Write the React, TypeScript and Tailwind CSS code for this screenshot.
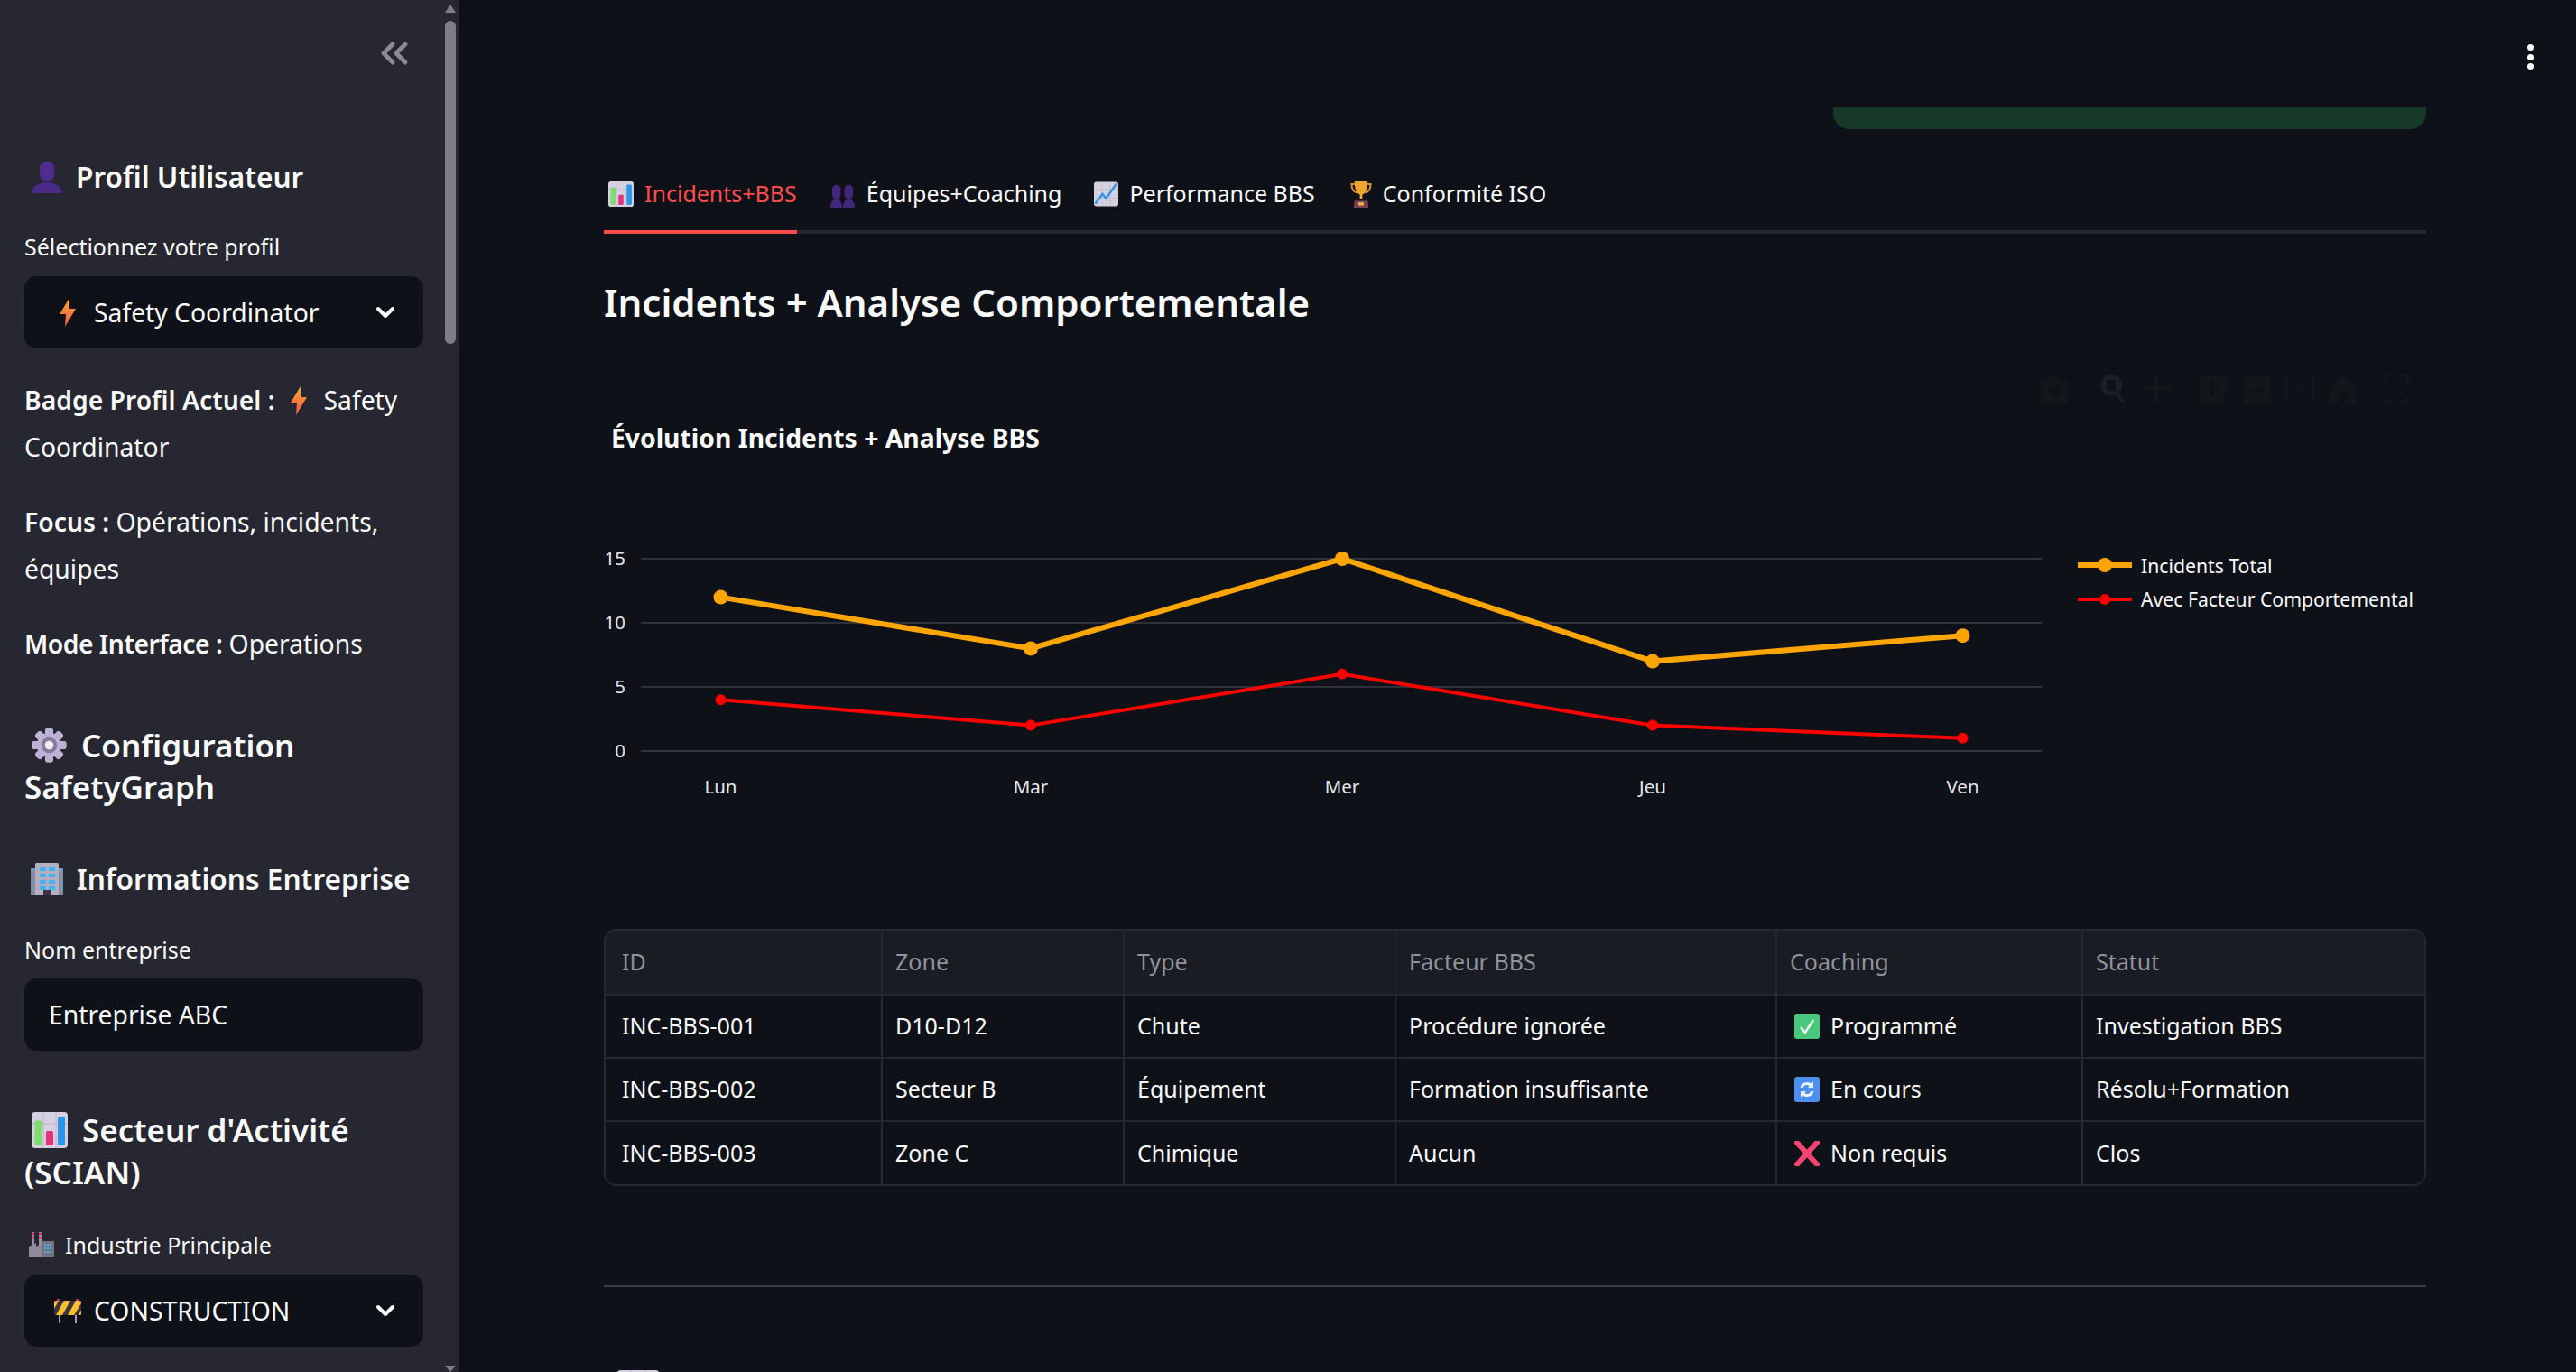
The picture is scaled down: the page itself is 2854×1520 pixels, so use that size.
import { ChevronDown, ChevronsLeft } from 'lucide-react';
import type { ReactNode } from 'react';

const fontStack = '[font-family:"Noto_Sans",sans-serif]';

function BustIcon({ className }: { className?: string }) {
  return (
    <svg viewBox="0 0 34 35" className={className}>
      <rect x="9" y="0" width="16" height="21" rx="7" fill="#4f2d8f" />
      <rect x="24" y="10" width="2.5" height="5" rx="1" fill="#3d2270" />
      <path d="M0 35C1 26 9 23 17 23C25 23 33 26 34 35Z" fill="#4a2a88" />
    </svg>
  );
}

function BoltIcon({ className }: { className?: string }) {
  return (
    <svg viewBox="0 0 18 32" className={className}>
      <defs>
        <linearGradient id="bolt" x1="0" y1="0" x2="0" y2="1">
          <stop offset="0" stopColor="#ffa726" />
          <stop offset="1" stopColor="#f4564a" />
        </linearGradient>
      </defs>
      <path d="M11 0L0 18H7L6 32L18 12H11Z" fill="url(#bolt)" />
    </svg>
  );
}

function GearIcon({ className }: { className?: string }) {
  const teeth = [0, 45, 90, 135, 180, 225, 270, 315];
  return (
    <svg viewBox="0 0 40 40" className={className}>
      {teeth.map((deg) => (
        <rect key={deg} x="15.5" y="0.5" width="9" height="39" rx="3" fill="#bdb1d6" transform={`rotate(${deg} 20 20)`} />
      ))}
      <circle cx="20" cy="20" r="14" fill="#bdb1d6" />
      <circle cx="20" cy="20" r="9" fill="#857a98" />
      <circle cx="20" cy="20" r="5" fill="#f0edf6" />
    </svg>
  );
}

function BuildingIcon({ className }: { className?: string }) {
  const rows = [5, 12, 19, 26];
  return (
    <svg viewBox="0 0 36 36" className={className}>
      <rect x="0" y="6" width="36" height="30" rx="1" fill="#8d8a9c" />
      <rect x="5" y="0" width="26" height="36" rx="1.5" fill="#b3aec0" />
      {rows.map((y) => (
        <g key={y} fill="#3fb3f2">
          <rect x="10" y={y} width="7" height="4" />
          <rect x="20" y={y} width="7" height="4" />
          <rect x="1" y={y + 1} width="2" height="3" />
          <rect x="33" y={y + 1} width="2" height="3" />
        </g>
      ))}
      <rect x="14" y="30" width="8" height="6" fill="#3c3148" />
    </svg>
  );
}

function BarChartIcon({ className }: { className?: string }) {
  return (
    <svg viewBox="0 0 40 40" className={className}>
      <rect width="40" height="40" rx="4" fill="#d6d1e0" />
      <path d="M13 0V40M27 0V40M0 13H40M0 27H40" stroke="#bcb6c9" strokeWidth="1" />
      <rect x="3.5" y="9.5" width="8" height="27" rx="1.5" fill="#7fdc6e" />
      <rect x="16" y="21" width="8" height="16" rx="1.5" fill="#ea2f7c" />
      <rect x="29" y="5" width="8" height="32" rx="1.5" fill="#2b95ea" />
    </svg>
  );
}

function LineChartIcon({ className }: { className?: string }) {
  return (
    <svg viewBox="0 0 40 40" className={className}>
      <rect width="40" height="40" rx="4" fill="#d6d1e0" />
      <path d="M13 0V40M27 0V40M0 13H40M0 27H40" stroke="#bcb6c9" strokeWidth="1" />
      <path d="M2 36L14 20L20 27L37 3" fill="none" stroke="#2b95ea" strokeWidth="3.5" />
    </svg>
  );
}

function FactoryIcon({ className }: { className?: string }) {
  return (
    <svg viewBox="0 0 28 28" className={className}>
      <rect x="3" y="0" width="3" height="15" fill="#9a93a3" />
      <rect x="11" y="0" width="3" height="15" fill="#9a93a3" />
      <path d="M3 2H6M3 6H6M11 2H14M11 6H14" stroke="#e0245e" strokeWidth="2" />
      <path d="M0 28V16L8 12V16L15 12V28Z" fill="#8f8a98" />
      <rect x="15" y="10" width="13" height="18" fill="#77727f" />
      <path d="M17 14H26M17 18H26M17 22H26" stroke="#45b4ee" strokeWidth="2" strokeDasharray="2 1" />
    </svg>
  );
}

function BarrierIcon({ className }: { className?: string }) {
  return (
    <svg viewBox="0 0 30 27" className={className}>
      <path d="M6 16V27M24 16V27" stroke="#a99bb0" strokeWidth="2" />
      <rect x="3" y="0" width="3" height="3" fill="#d5295f" />
      <rect x="24" y="0" width="3" height="3" fill="#d5295f" />
      <rect x="0" y="2" width="30" height="16" rx="1.5" fill="#fbbf2d" />
      <path d="M5 2H11L2 18H0V11ZM18 2H24L15 18H9ZM30 5V12L27 18H22L30 5Z" fill="#3a3340" />
    </svg>
  );
}

function BustsIcon({ className }: { className?: string }) {
  return (
    <svg viewBox="0 0 30 30" className={className}>
      <rect x="3" y="4" width="10" height="16" rx="5" fill="#43267c" />
      <rect x="17" y="4" width="10" height="16" rx="5" fill="#43267c" />
      <path d="M1 30C1 23 5 20 8 20C11 20 14.5 23 14.5 30Z" fill="#43267c" />
      <path d="M15.5 30C15.5 23 19 20 22 20C25 20 29 23 29 30Z" fill="#43267c" />
    </svg>
  );
}

function TrophyIcon({ className }: { className?: string }) {
  return (
    <svg viewBox="0 0 25 30" className={className}>
      <path d="M5 3H1.5C1.5 9 3 12 8 13M20 3H23.5C23.5 9 22 12 17 13" fill="none" stroke="#e09a2c" strokeWidth="2" />
      <path d="M5 0H20C20 9 18 14 14 15V20H11V15C7 14 5 9 5 0Z" fill="#eda52f" />
      <path d="M5 22H20L21 30H4Z" fill="#7c3f52" />
      <rect x="9.5" y="24" width="6" height="3.5" fill="#f2b544" />
    </svg>
  );
}

function CheckIcon({ className }: { className?: string }) {
  return (
    <svg viewBox="0 0 28 28" className={className}>
      <rect width="28" height="28" rx="3" fill="#49c77c" />
      <path d="M7 15L12 21L21 7" fill="none" stroke="#f4f6f2" strokeWidth="2.5" />
    </svg>
  );
}

function RefreshIcon({ className }: { className?: string }) {
  return (
    <svg viewBox="0 0 28 28" className={className}>
      <rect width="28" height="28" rx="3" fill="#4b8ff0" />
      <path d="M8 12C9 7 16 6 19 10M20 16C19 21 12 22 9 18" fill="none" stroke="#eef2fb" strokeWidth="3" />
      <path d="M21 5V12H15ZM7 23V16H13Z" fill="#eef2fb" />
    </svg>
  );
}

function CrossIcon({ className }: { className?: string }) {
  return (
    <svg viewBox="0 0 28 28" className={className}>
      <path d="M3 2L25 26M25 2L3 26" stroke="#f4436f" strokeWidth="6" strokeLinecap="round" />
    </svg>
  );
}

function Select({ icon, label }: { icon: ReactNode; label: string }) {
  return (
    <div className="flex h-[80px] items-center rounded-[14px] bg-[#0e1117] pl-[32px] pr-[26px] text-[28.3px] text-[#fafafa]">
      <span className="mr-[13px] flex w-[32px] justify-center">{icon}</span>
      <span className="flex-1">{label}</span>
      <ChevronDown size={32} strokeWidth={3} className="text-white" />
    </div>
  );
}

const tabs = [
  { label: 'Incidents+BBS', icon: <BarChartIcon className="ml-[5px] h-[28px] w-[28px]" />, active: true },
  { label: 'Équipes+Coaching', icon: <BustsIcon className="h-[29px] w-[29px]" /> },
  { label: 'Performance BBS', icon: <LineChartIcon className="h-[28px] w-[27px]" /> },
  { label: 'Conformité ISO', icon: <TrophyIcon className="ml-[3px] h-[29px] w-[24px]" /> },
];

const rows = [
  { id: 'INC-BBS-001', zone: 'D10-D12', type: 'Chute', factor: 'Procédure ignorée', coaching: 'Programmé', icon: <CheckIcon className="h-[28px] w-[28px]" />, status: 'Investigation BBS' },
  { id: 'INC-BBS-002', zone: 'Secteur B', type: 'Équipement', factor: 'Formation insuffisante', coaching: 'En cours', icon: <RefreshIcon className="h-[28px] w-[28px]" />, status: 'Résolu+Formation' },
  { id: 'INC-BBS-003', zone: 'Zone C', type: 'Chimique', factor: 'Aucun', coaching: 'Non requis', icon: <CrossIcon className="h-[28px] w-[28px]" />, status: 'Clos' },
];

// chart is drawn in an svg whose origin sits at x=669, y=400 of the page
const days = ['Lun', 'Mar', 'Mer', 'Jeu', 'Ven'];
const xs = [129.5, 473, 818, 1162, 1505.5];
const yOf = (v: number) => 432 - v * 14.2;
const total = [12, 8, 15, 7, 9];
const withBbs = [4, 2, 6, 2, 1];
const points = (vals: number[]) => vals.map((v, i) => `${xs[i]},${yOf(v)}`).join(' ');

function Chart() {
  return (
    <svg viewBox="0 0 2019 560" className="block h-[560px] w-[2019px]">
      <text x="8" y="96" fontSize="28.3" fontWeight="700" fill="#fafafa">Évolution Incidents + Analyse BBS</text>
      {[0, 5, 10, 15].map((v) => (
        <g key={v}>
          <line x1="41" x2="1593" y1={yOf(v)} y2={yOf(v)} stroke="#31333c" strokeWidth="2" />
          <text x="24" y={yOf(v) + 7} fontSize="20.5" textAnchor="end" fill="#e6e8ee">{v}</text>
        </g>
      ))}
      {days.map((d, i) => (
        <text key={d} x={xs[i]} y="479" fontSize="20.5" textAnchor="middle" fill="#e6e8ee">{d}</text>
      ))}
      <polyline points={points(total)} fill="none" stroke="#ffa500" strokeWidth="6" />
      <polyline points={points(withBbs)} fill="none" stroke="#ff0000" strokeWidth="4" />
      {total.map((v, i) => <circle key={i} cx={xs[i]} cy={yOf(v)} r="8" fill="#ffa500" />)}
      {withBbs.map((v, i) => <circle key={i} cx={xs[i]} cy={yOf(v)} r="6" fill="#ff0000" />)}
      <line x1="1633" x2="1693" y1="226" y2="226" stroke="#ffa500" strokeWidth="6" />
      <circle cx="1663" cy="226" r="8" fill="#ffa500" />
      <text x="1703" y="235" fontSize="21.2" fill="#fafafa">Incidents Total</text>
      <line x1="1633" x2="1693" y1="264" y2="264" stroke="#ff0000" strokeWidth="4" />
      <circle cx="1663" cy="264" r="6" fill="#ff0000" />
      <text x="1703" y="272" fontSize="21.2" fill="#fafafa">Avec Facteur Comportemental</text>
    </svg>
  );
}

function Modebar() {
  return (
    <svg viewBox="0 0 410 32" className="absolute right-[19px] top-[14px] h-[32px] w-[410px]" fill="#13161b">
      <path d="M2 8H10L12 4H22L24 8H32V32H2Z" />
      <circle cx="17" cy="18" r="6" fill="#0e1117" />
      <circle cx="80" cy="13" r="12" fill="#1a1e26" />
      <rect x="75" y="7" width="10" height="12" fill="#0e1117" />
      <path d="M86 22L94 32" stroke="#1a1e26" strokeWidth="4" />
      <path d="M130 0V32M114 16H146" stroke="#13161b" strokeWidth="4" />
      <rect x="178" y="2" width="28" height="30" />
      <path d="M192 8V26M184 17H200" stroke="#0e1117" strokeWidth="4" />
      <rect x="226" y="2" width="30" height="30" />
      <path d="M233 17H249" stroke="#0e1117" strokeWidth="4" />
      <path d="M274 2H304V32H274ZM281 8L297 26M297 8L281 26" fill="none" stroke="#13161b" strokeWidth="2" />
      <path d="M322 16L337 2L352 16V32H342V22H332V32H322Z" />
      <path d="M384 8V2H392M402 2H409V8M384 26V32H392M402 32H409V26" fill="none" stroke="#13161b" strokeWidth="4" />
    </svg>
  );
}

export default function App() {
  return (
    <div className={`flex h-[1520px] w-[2854px] overflow-hidden bg-[#0e1117] text-[#fafafa] ${fontStack}`}>
      <aside className="relative h-full w-[509px] shrink-0 bg-[#262730] pl-[27px] pr-[40px] pt-[35px]">
        {/* fake scrollbar */}
        <div className="absolute left-[493px] top-[5px] h-0 w-0 border-x-[6px] border-b-[9px] border-x-transparent border-b-[#7e7f85]" />
        <div className="absolute left-[493px] top-[23px] h-[358px] w-[12px] rounded-[6px] bg-[#7e7f85]" />
        <div className="absolute left-[493px] top-[1513px] h-0 w-0 border-x-[6px] border-t-[7px] border-x-transparent border-t-[#7e7f85]" />

        <div className="flex justify-end pr-[8px]">
          <ChevronsLeft size={48} strokeWidth={2.4} className="text-[#8b8c92]" />
        </div>

        <h3 className="mt-[90px] flex h-[46px] items-center whitespace-nowrap text-[31.6px] font-semibold">
          <BustIcon className="ml-[8px] mr-[15px] h-[35px] w-[34px]" />
          Profil Utilisateur
        </h3>
        <p className="mt-[36px] text-[25px] leading-[36px]">Sélectionnez votre profil</p>
        <div className="mt-[15px]">
          <Select icon={<BoltIcon className="h-[32px] w-[18px]" />} label="Safety Coordinator" />
        </div>

        <p className="mt-[31px] text-[28.3px] leading-[52px]">
          <b className="font-semibold">Badge Profil Actuel :</b>
          <BoltIcon className="mx-[18px] inline h-[32px] w-[18px] align-[-6px]" />
          Safety Coordinator
        </p>
        <p className="mt-[31px] text-[28.3px] leading-[52px]">
          <b className="font-semibold">Focus :</b> Opérations, incidents, équipes
        </p>
        <p className="mt-[31px] text-[28.3px] leading-[52px]">
          <b className="font-semibold tracking-[-0.5px]">Mode Interface :</b> Operations
        </p>

        <h3 className="mt-[64px] text-[35px] font-semibold leading-[46px]">
          <GearIcon className="ml-[8px] mr-[16px] inline h-[39px] w-[39px] align-[-6px]" />
          Configuration SafetyGraph
        </h3>
        <h3 className="mt-[56px] flex h-[46px] items-center whitespace-nowrap text-[31.6px] font-semibold">
          <BuildingIcon className="ml-[7px] mr-[15px] h-[36px] w-[36px]" />
          Informations Entreprise
        </h3>
        <p className="mt-[37px] text-[25px] leading-[36px]">Nom entreprise</p>
        <div className="mt-[14px] flex h-[80px] items-center rounded-[14px] bg-[#0e1117] pl-[27px] text-[28.3px]">Entreprise ABC</div>

        <h3 className="mt-[64px] text-[35px] font-semibold leading-[47px]">
          <BarChartIcon className="ml-[8px] mr-[16px] inline h-[40px] w-[40px] align-[-7px]" />
          Secteur d'Activité (SCIAN)
        </h3>
        <p className="mt-[39px] flex items-center text-[25px] leading-[36px]">
          <FactoryIcon className="ml-[5px] mr-[12px] h-[28px] w-[28px]" />
          Industrie Principale
        </p>
        <div className="mt-[15px]">
          <Select icon={<BarrierIcon className="h-[27px] w-[30px]" />} label="CONSTRUCTION" />
        </div>
      </aside>

      <main className="relative h-full flex-1 overflow-hidden pl-[160px] pr-[166px]">
        <div className="absolute right-[47px] top-[49px] flex flex-col gap-[3.5px]">
          <span className="h-[7px] w-[7px] rounded-full bg-white" />
          <span className="h-[7px] w-[7px] rounded-full bg-white" />
          <span className="h-[7px] w-[7px] rounded-full bg-white" />
        </div>

        <div className="mt-[119px] flex justify-end">
          <div className="h-[24px] w-[657px] rounded-b-[18px] bg-[#173928]" />
        </div>

        <div className="mt-[32px] flex h-[84px] gap-[36px] border-b-4 border-[#262730]">
          {tabs.map((tab) => (
            <div
              key={tab.label}
              className={`-mb-[4px] flex h-[84px] items-center gap-[12px] border-b-4 text-[25px] ${tab.active ? 'border-[#ff4b4b] text-[#ff4b4b]' : 'border-transparent text-[#fafafa]'}`}
            >
              {tab.icon}
              {tab.label}
            </div>
          ))}
        </div>

        <h2 className="mt-[46px] text-[42px] font-semibold leading-[60px]">Incidents + Analyse Comportementale</h2>

        <div className="relative mt-[35px]">
          <Modebar />
          <Chart />
        </div>

        <div className="mt-[69px] overflow-hidden rounded-[14px] border-2 border-[#262730]">
          <table className="w-full table-fixed border-collapse text-[25px]">
            <thead>
              <tr className="h-[71px] border-b-2 border-[#262730] bg-[#1a1c24] text-left text-[#91939a]">
                <th className="w-[306px] border-r-2 border-[#262730] pl-[18px] font-normal">ID</th>
                <th className="w-[268px] border-r-2 border-[#262730] pl-[14px] font-normal">Zone</th>
                <th className="w-[301px] border-r-2 border-[#262730] pl-[14px] font-normal">Type</th>
                <th className="w-[422px] border-r-2 border-[#262730] pl-[14px] font-normal">Facteur BBS</th>
                <th className="w-[339px] border-r-2 border-[#262730] pl-[14px] font-normal">Coaching</th>
                <th className="pl-[14px] font-normal">Statut</th>
              </tr>
            </thead>
            <tbody>
              {rows.map((row, i) => (
                <tr key={row.id} className={`h-[70px] ${i < rows.length - 1 ? 'border-b-2 border-[#262730]' : ''}`}>
                  <td className="border-r-2 border-[#262730] pl-[18px]">{row.id}</td>
                  <td className="border-r-2 border-[#262730] pl-[14px]">{row.zone}</td>
                  <td className="border-r-2 border-[#262730] pl-[14px]">{row.type}</td>
                  <td className="border-r-2 border-[#262730] pl-[14px]">{row.factor}</td>
                  <td className="border-r-2 border-[#262730] pl-[19px]">
                    <span className="flex items-center gap-[12px]">
                      {row.icon}
                      {row.coaching}
                    </span>
                  </td>
                  <td className="pl-[14px]">{row.status}</td>
                </tr>
              ))}
            </tbody>
          </table>
        </div>

        <hr className="mt-[110px] border-t-2 border-[#3d3f46]" />
        <div className="ml-[14px] mt-[92px]">
          <BarChartIcon className="h-[48px] w-[48px]" />
        </div>
      </main>
    </div>
  );
}
